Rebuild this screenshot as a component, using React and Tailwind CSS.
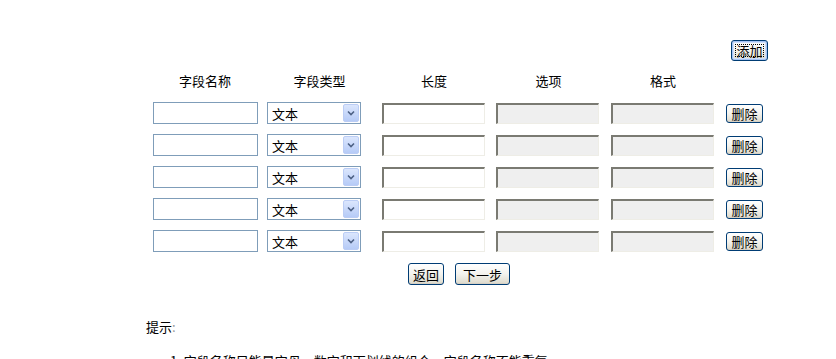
import React from "react";

const font = { fontFamily: '"Noto Sans CJK SC", "Liberation Sans", sans-serif' };

function XpButton({ children, w, h = 21, focused = false }) {
  return (
    <div
      className={`flex items-center justify-center rounded-[3px] border border-[#003c74] bg-gradient-to-b from-white via-[#f4f3ee] to-[#dcd9cb] text-[13px] leading-none text-black ${focused ? "shadow-[inset_0_0_0_1px_#a6c4f5,inset_0_0_0_2px_#cfdef9]" : "shadow-[inset_0_-1px_0_#d6d0c4]"}`}
      style={{ width: w, height: h }}
    >
      {focused ? (
        <span className="flex h-[calc(100%-6px)] w-[calc(100%-6px)] items-center justify-center border border-dotted border-black">
          {children}
        </span>
      ) : (
        children
      )}
    </div>
  );
}

function NameInput() {
  return <div className="h-[22px] w-[105px] border border-[#7f9db9] bg-white" />;
}

function InsetInput({ disabled }) {
  return (
    <div
      className={`h-[21px] w-[103px] border-t-2 border-l-2 border-b border-r border-t-[#7a7a72] border-l-[#7a7a72] border-b-[#eeede6] border-r-[#eeede6] ${disabled ? "bg-[#efefef]" : "bg-white"}`}
    />
  );
}

function SelectBox() {
  return (
    <div className="flex h-[22px] w-[94px] items-center border border-[#7f9db9] bg-white">
      <span className="flex-1 pl-[4px] text-[13px] leading-none text-black">文本</span>
      <div className="mr-[1px] flex h-[18px] w-[16px] items-center justify-center rounded-[2px] border border-[#bbcdf5] bg-gradient-to-b from-[#dbe6fd] to-[#b6cbf7]">
        <svg width="8" height="6" viewBox="0 0 8 6">
          <path d="M1 1.5 L4 4.5 L7 1.5" fill="none" stroke="#4d6185" strokeWidth="1.6" />
        </svg>
      </div>
    </div>
  );
}

const cols = "grid grid-cols-[114px_115px_114px_115px_114px_50px]";

export default function App() {
  const rows = [0, 1, 2, 3, 4];
  return (
    <div className="relative h-[359px] w-[836px] overflow-hidden bg-white text-black" style={font}>
      <div className="pl-[731px] pt-[40px]">
        <XpButton w={37} h={21} focused>
          添加
        </XpButton>
      </div>
      <div className="ml-[148px] w-[622px]">
        <div className={`${cols} mt-[13px] h-[14px] text-[13px] leading-[14px]`}>
          <div className="text-center">字段名称</div>
          <div className="text-center">字段类型</div>
          <div className="text-center">长度</div>
          <div className="text-center">选项</div>
          <div className="text-center">格式</div>
          <div />
        </div>
        <div className="mt-[14px] flex flex-col gap-[10px]">
          {rows.map((r) => (
            <div key={r} className={`${cols} h-[22px] items-center`}>
              <div className="pl-[5px]">
                <NameInput />
              </div>
              <div className="pl-[5px]">
                <SelectBox />
              </div>
              <div className="pl-[5px]">
                <InsetInput />
              </div>
              <div className="pl-[5px]">
                <InsetInput disabled />
              </div>
              <div className="pl-[5px]">
                <InsetInput disabled />
              </div>
              <div className="pl-[6px]">
                <XpButton w={37} h={19}>
                  删除
                </XpButton>
              </div>
            </div>
          ))}
        </div>
        <div className="mt-[11px] flex justify-center gap-[11px]">
          <XpButton w={36} h={22}>
            返回
          </XpButton>
          <XpButton w={55} h={22}>
            下一步
          </XpButton>
        </div>
      </div>
      <div className="mt-[35px] pl-[146px] text-[13px] leading-[14px]">
        提示<span className="text-[#999]">:</span>
      </div>
      <div className="mt-[20px] pl-[170px] text-[13px] leading-[14px] whitespace-nowrap">
        1. 字段名称只能是字母、数字和下划线的组合，字段名称不能重复
      </div>
    </div>
  );
}
